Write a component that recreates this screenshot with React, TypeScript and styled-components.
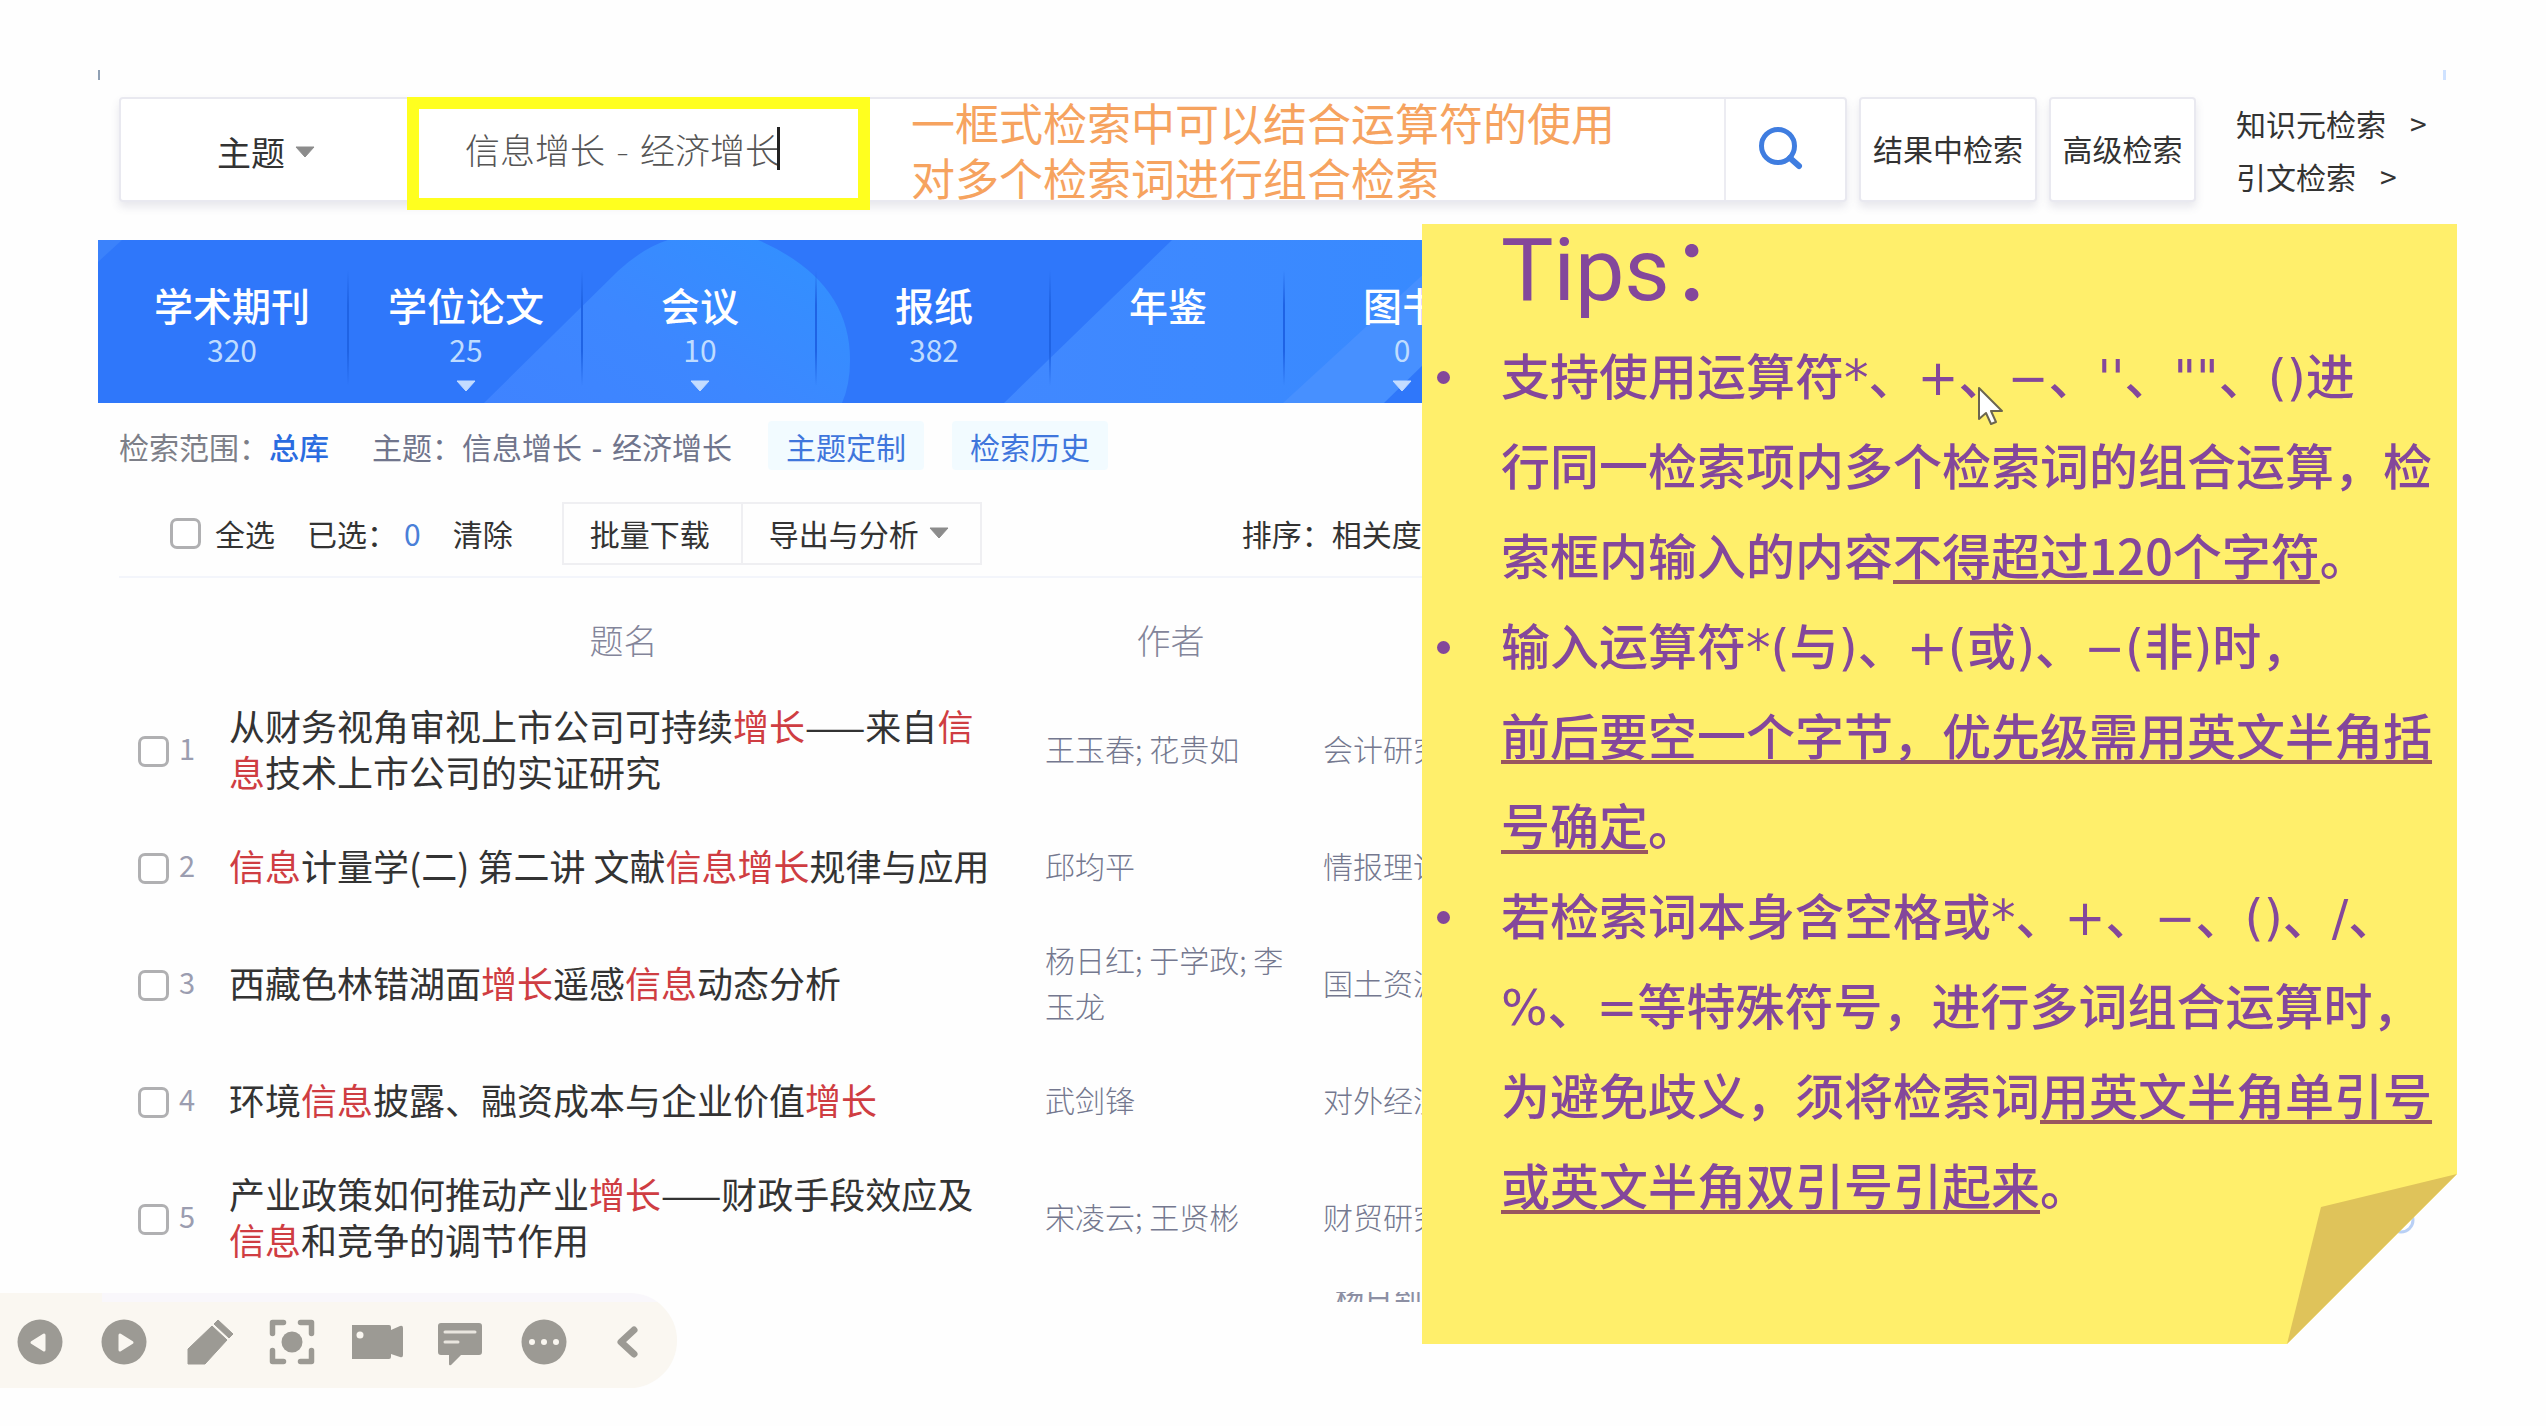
import React from "react";
import styled, { createGlobalStyle } from "styled-components";

const cjk = `"Noto Sans CJK SC", sans-serif`;
const wide = `"DejaVu Sans", "Noto Sans CJK SC", sans-serif`;

const GlobalStyle = createGlobalStyle`
  * { box-sizing: border-box; }
  body { margin: 0; background: #fefefe; font-family: ${cjk}; color: #333; }
  button, input, select { font: inherit; color: inherit; margin: 0; padding: 0; background: none; border: 0; }
  a { color: inherit; text-decoration: none; }
  p, ul, h2 { margin: 0; padding: 0; }
`;

const Page = styled.div`
  position: relative;
  min-height: 100vh;
  overflow: hidden;
  padding: 70px 100px 0 98px;
`;

const Slide = styled.main`
  display: flex;
  flex-direction: column;
`;

const FrameTop = styled.div`
  height: 10px;
  border-left: 2px solid #8fa0b4;
  border-right: 3px solid #cfe2ff;
`;

const SearchRow = styled.form`
  display: flex;
  gap: 12px;
  height: 105px;
  margin: 17px 0 0 21px;
`;

const SearchBox = styled.div`
  flex: 1;
  display: flex;
  background: #fff;
  border: 2px solid #e9e9f0;
  border-radius: 4px;
  box-shadow: 0 5px 8px rgba(90, 90, 130, 0.14);
`;

const FieldPicker = styled.label`
  flex: none;
  width: 286px;
  display: flex;
  align-items: center;
  justify-content: center;
  gap: 10px;
  padding: 4px 0 0 4px;
  font-size: 34px;
`;

const FieldSelect = styled.select`
  appearance: none;
  line-height: 48px;
`;

const QueryFrame = styled.label`
  flex: none;
  width: 463px;
  height: 113px;
  margin-top: -2px;
  padding: 0 0 10px 46px;
  display: flex;
  align-items: center;
  background: #fff;
  border: 12px solid #ffff1f;
`;

const QueryInput = styled.input`
  width: 316px;
  height: 48px;
  outline: none;
  font-family: ${wide};
  font-size: 35px;
  font-weight: 300;
  color: #555;
`;

const TextCursor = styled.span`
  width: 3px;
  height: 43px;
  margin-left: -4px;
  background: #222;
`;

const Hint = styled.p`
  flex: 1;
  margin-top: -4px;
  padding-left: 41px;
  font-size: 44px;
  line-height: 55px;
  color: #f6a35f;
  white-space: nowrap;
`;

const SearchButton = styled.button`
  flex: none;
  width: 121px;
  padding: 0 10px 4px 0;
  border-left: 2px solid #ececf2;
  display: flex;
  align-items: center;
  justify-content: center;
`;

const BoxButton = styled.button<{ $width: number }>`
  width: ${(p) => p.$width}px;
  padding-bottom: 4px;
  background: #fff;
  border: 2px solid #e9e9f0;
  border-radius: 4px;
  box-shadow: 0 5px 8px rgba(90, 90, 130, 0.14);
  font-size: 30px;
  white-space: nowrap;
`;

const SideLinks = styled.nav`
  width: 210px;
  margin-left: 28px;
  display: flex;
  flex-direction: column;
`;

const SideLink = styled.a`
  display: flex;
  align-items: center;
  gap: 24px;
  font-size: 30px;
  line-height: 53px;
  white-space: nowrap;
`;

const Banner = styled.nav`
  position: relative;
  display: flex;
  height: 163px;
  margin-top: 38px;
  padding-left: 17px;
  background: #2f77fa;
  overflow: hidden;
`;

const BannerArt = styled.svg`
  position: absolute;
  left: 0;
  top: 0;
`;

const Tab = styled.a`
  position: relative;
  width: 234px;
  display: flex;
  flex-direction: column;
  align-items: center;
  padding-top: 38px;
  color: #fff;

  &::after {
    content: "";
    position: absolute;
    right: 0;
    top: 30px;
    width: 2px;
    height: 116px;
    background: linear-gradient(transparent, #1f63e4 30%, #1f63e4 70%, transparent);
  }
`;

const TabName = styled.span`
  font-size: 39px;
  font-weight: 500;
  line-height: 52px;
  white-space: nowrap;
`;

const TabCount = styled.span`
  height: 40px;
  margin-bottom: 10px;
  font-size: 30px;
  line-height: 38px;
  color: #bfdcff;
`;

const InfoRow = styled.div`
  display: flex;
  align-items: center;
  height: 49px;
  margin: 18px 0 0 21px;
  font-size: 30px;
  white-space: nowrap;
  color: #7d7f88;
`;

const Scope = styled.a`
  margin-right: 43px;
  font-weight: 500;
  color: #2a6ce0;
`;

const Query = styled.span`
  width: 396px;
  font-family: ${wide};
  color: #70758c;
`;

const Chip = styled.button`
  height: 49px;
  padding: 0 18px;
  margin-right: 28px;
  background: #f2fbff;
  border-radius: 4px;
  color: #3f76dc;
`;

const Toolbar = styled.div`
  display: flex;
  align-items: center;
  height: 76px;
  margin: 32px 0 0 21px;
  padding: 0 0 12px 51px;
  border-bottom: 2px solid #f3f5fb;
  font-size: 30px;
  white-space: nowrap;
`;

const CheckLabel = styled.label`
  display: flex;
  align-items: center;
  gap: 14px;
`;

const Checkbox = styled.input`
  appearance: none;
  flex: none;
  width: 31px;
  height: 31px;
  border: 3px solid #b0b0b2;
  border-radius: 7px;
  background: #fff;
`;

const Picked = styled.span`
  display: flex;
  gap: 7px;
  margin: 0 32px;
`;

const PickedCount = styled.span`
  color: #4a80d8;
`;

const ActionGroup = styled.div`
  display: flex;
  height: 63px;
  margin-left: 49px;
  border: 2px solid #efeff2;
`;

const Action = styled.button`
  display: flex;
  align-items: center;
  gap: 10px;
  padding: 0 31px 0 26px;

  & + & {
    border-left: 2px solid #efeff2;
  }
`;

const Sort = styled.span`
  margin-left: 260px;
`;

const Results = styled.table`
  width: calc(100% - 21px);
  margin: 13px 0 0 21px;
  table-layout: fixed;
  border-collapse: collapse;

  th {
    height: 100px;
    padding: 0 0 4px;
    font-size: 34px;
    font-weight: 300;
    color: #83859a;
  }

  td {
    height: 117px;
    padding: 0 0 4px;
    vertical-align: middle;
  }
`;

const PickCell = styled.td`
  label {
    display: flex;
    align-items: center;
    gap: 10px;
    padding-left: 19px;
    font-size: 29px;
    line-height: 31px;
    color: #9b9db0;
  }

  input {
    margin-top: 8px;
  }
`;

const TitleCell = styled.td`
  && {
    padding-right: 26px;
  }
  font-size: 36px;
  line-height: 46px;
`;

const Hit = styled.em`
  font-style: normal;
  color: #cf3d42;
`;

const MetaCell = styled.td<{ $inset?: boolean }>`
  && {
    padding: ${(p) => (p.$inset ? "0 28px 4px 27px" : "0 0 4px")};
  }
  font-size: 30px;
  line-height: 46px;
  font-weight: 300;
  color: #74788f;
`;

const Sliver = styled.div`
  display: flex;
  align-items: center;
  height: 10px;
  padding-left: 12px;
  overflow: hidden;
  font-size: 29px;
  line-height: 10px;
  color: #8c8fa3;
`;

const SliverCell = styled.td`
  && {
    height: 26px;
    padding: 0;
    vertical-align: bottom;
  }
`;

const Help = styled.svg`
  position: absolute;
  right: 130px;
  top: 1205px;
`;

const Note = styled.aside`
  position: absolute;
  top: 224px;
  right: 89px;
  width: 1035px;
  height: 1120px;
  padding-left: 79px;
  color: #84479b;
  font-weight: 500;
`;

const NotePaper = styled.svg`
  position: absolute;
  left: 0;
  top: 0;
`;

const NoteTitle = styled.h2`
  position: relative;
  height: 110px;
  font-family: Roboto, ${cjk};
  font-size: 88px;
  font-weight: 400;
  line-height: 92px;
`;

const NoteList = styled.ul`
  position: relative;
  list-style: none;
  font-family: ${wide};
  font-size: 49px;
  line-height: 90px;
`;

const NoteItem = styled.li`
  position: relative;

  &::before {
    content: "";
    position: absolute;
    left: -64px;
    top: 37px;
    width: 13px;
    height: 13px;
    border-radius: 50%;
    background: #84479b;
  }
`;

const Line = styled.span`
  display: block;
  height: 90px;
  white-space: nowrap;
`;

const Mark = styled.u`
  font-family: ${cjk};
  line-height: 1;
  text-decoration: underline;
  text-decoration-color: #99565f;
  text-decoration-thickness: 4px;
  text-underline-offset: 5px;
  text-decoration-skip-ink: none;
`;

const Pointer = styled.svg`
  position: absolute;
  left: 555px;
  top: 162px;
`;

const ShowBar = styled.div`
  position: absolute;
  left: 0;
  top: 1293px;
  width: 677px;
  height: 95px;
  display: flex;
  align-items: center;
  padding: 2px 0 0 16px;
  border-radius: 0 48px 48px 0;
  background: linear-gradient(#f9f7fb, #f9f7fb) 102px 0 / 575px 9px no-repeat, #faf7f1;
`;

const ShowButton = styled.button`
  display: flex;
  width: 84px;
  justify-content: flex-start;
`;

const CollapseButton = styled(ShowButton)`
  width: 58px;
  padding-left: 6px;
`;

const Caret = ({ size = 20, color = "#8c8c8c" }: { size?: number; color?: string }) => (
  <svg width={size} height="12" viewBox="0 0 20 12" aria-hidden="true">
    <path d="M1 1h18l-9 10z" fill={color} stroke={color} strokeLinejoin="round" />
  </svg>
);

const tabs = [
  { name: "学术期刊", count: "320", more: false },
  { name: "学位论文", count: "25", more: true },
  { name: "会议", count: "10", more: true },
  { name: "报纸", count: "382", more: false },
  { name: "年鉴", count: "", more: false },
  { name: "图书", count: "0", more: true },
];

const rows = [
  {
    title: ["从财务视角审视上市公司可持续", "*增长", "——来自", "*信息", "技术上市公司的实证研究"],
    author: "王玉春; 花贵如",
    source: "会计研究",
  },
  {
    title: ["*信息", "计量学(二) 第二讲 文献", "*信息增长", "规律与应用"],
    author: "邱均平",
    source: "情报理论",
  },
  {
    title: ["西藏色林错湖面", "*增长", "遥感", "*信息", "动态分析"],
    author: "杨日红; 于学政; 李玉龙",
    source: "国土资源",
  },
  {
    title: ["环境", "*信息", "披露、融资成本与企业价值", "*增长"],
    author: "武剑锋",
    source: "对外经济",
  },
  {
    title: ["产业政策如何推动产业", "*增长", "——财政手段效应及", "*信息", "和竞争的调节作用"],
    author: "宋凌云; 王贤彬",
    source: "财贸研究",
  },
];

const gray = "#9c9a94";

export default function App() {
  return (
    <Page>
      <GlobalStyle />
      <Slide>
        <FrameTop />
        <SearchRow onSubmit={(e) => e.preventDefault()}>
          <SearchBox>
            <FieldPicker>
              <FieldSelect aria-label="检索字段">
                <option>主题</option>
              </FieldSelect>
              <Caret />
            </FieldPicker>
            <QueryFrame>
              <QueryInput aria-label="检索词" defaultValue="信息增长 - 经济增长" />
              <TextCursor />
            </QueryFrame>
            <Hint>
              一框式检索中可以结合运算符的使用
              <br />
              对多个检索词进行组合检索
            </Hint>
            <SearchButton aria-label="检索">
              <svg width="46" height="44" viewBox="0 0 46 44" fill="none" stroke="#3f7de0" aria-hidden="true">
                <circle cx="20" cy="20" r="16.5" strokeWidth="5" />
                <path d="M32 32l9 8" strokeWidth="6" strokeLinecap="round" />
              </svg>
            </SearchButton>
          </SearchBox>
          <BoxButton type="button" $width={178}>结果中检索</BoxButton>
          <BoxButton type="button" $width={147}>高级检索</BoxButton>
          <SideLinks>
            <SideLink href="#">知识元检索<span>&gt;</span></SideLink>
            <SideLink href="#">引文检索<span>&gt;</span></SideLink>
          </SideLinks>
        </SearchRow>

        <Banner>
          <BannerArt width="2348" height="163" aria-hidden="true">
            <defs>
              <linearGradient id="drop" x1="0" y1="1" x2="1" y2="0.3">
                <stop offset="0" stopColor="#3f83ff" />
                <stop offset="0.5" stopColor="#3d87ff" />
                <stop offset="1" stopColor="#338fff" />
              </linearGradient>
              <linearGradient id="sweep" x1="0" y1="0" x2="1" y2="0">
                <stop offset="0" stopColor="#4188ff" />
                <stop offset="0.7" stopColor="#388aff" />
                <stop offset="1" stopColor="#3c84fb" />
              </linearGradient>
            </defs>
            <path d="M0 0h24L0 22z" fill="#3b82fb" />
            <path d="M386 163L520 31Q545 8 570 0H660Q752 40 752 120Q752 145 744 163z" fill="url(#drop)" />
            <path d="M906 163L1074 0H1500V163z" fill="url(#sweep)" />
            <path d="M1185 163L1330 30V163z" fill="#4790ff" />
            <path d="M1286 163L1330 120V163z" fill="#2f77fa" />
          </BannerArt>
          {tabs.map((t) => (
            <Tab href="#" key={t.name}>
              <TabName>{t.name}</TabName>
              <TabCount>{t.count}</TabCount>
              {t.more && <Caret color="#c3dcff" />}
            </Tab>
          ))}
        </Banner>

        <InfoRow>
          <span>检索范围：</span>
          <Scope href="#">总库</Scope>
          <Query>主题：信息增长 - 经济增长</Query>
          <Chip>主题定制</Chip>
          <Chip>检索历史</Chip>
        </InfoRow>

        <Toolbar>
          <CheckLabel>
            <Checkbox type="checkbox" />
            全选
          </CheckLabel>
          <Picked>
            已选：<PickedCount>0</PickedCount>
          </Picked>
          <button>清除</button>
          <ActionGroup>
            <Action>批量下载</Action>
            <Action>
              导出与分析
              <Caret />
            </Action>
          </ActionGroup>
          <Sort>排序：相关度</Sort>
        </Toolbar>

        <Results>
          <colgroup>
            <col style={{ width: 110 }} />
            <col style={{ width: 789 }} />
            <col style={{ width: 305 }} />
            <col />
          </colgroup>
          <thead>
            <tr>
              <th />
              <th>题名</th>
              <th>作者</th>
              <th />
            </tr>
          </thead>
          <tbody>
            {rows.map((r, i) => (
              <tr key={r.author}>
                <PickCell>
                  <label>
                    <Checkbox type="checkbox" />
                    {i + 1}
                  </label>
                </PickCell>
                <TitleCell>
                  {r.title.map((part, k) =>
                    part.startsWith("*") ? <Hit key={k}>{part.slice(1)}</Hit> : <span key={k}>{part}</span>
                  )}
                </TitleCell>
                <MetaCell $inset>{r.author}</MetaCell>
                <MetaCell>{r.source}</MetaCell>
              </tr>
            ))}
            <tr>
              <SliverCell colSpan={3} />
              <SliverCell>
                <Sliver>杨日到</Sliver>
              </SliverCell>
            </tr>
          </tbody>
        </Results>
      </Slide>

      <Help width="30" height="30" viewBox="0 0 30 30" fill="none" aria-hidden="true">
        <circle cx="15" cy="15" r="12" stroke="#b9d0f5" strokeWidth="3" />
      </Help>

      <Note>
        <NotePaper width="1035" height="1120" aria-hidden="true">
          <path d="M0 0H1035V950L865 1120H0z" fill="#ffef6b" />
          <path d="M1035 950L899 983L865 1120z" fill="#dfc35a" />
        </NotePaper>
        <NoteTitle>Tips：</NoteTitle>
        <NoteList>
          <NoteItem>
            <Line>支持使用运算符*、+、−、''、""、()进</Line>
            <Line>行同一检索项内多个检索词的组合运算，检</Line>
            <Line>索框内输入的内容<Mark>不得超过120个字符</Mark>。</Line>
          </NoteItem>
          <NoteItem>
            <Line>输入运算符*(与)、+(或)、−(非)时，</Line>
            <Line><Mark>前后要空一个字节，优先级需用英文半角括</Mark></Line>
            <Line><Mark>号确定</Mark>。</Line>
          </NoteItem>
          <NoteItem>
            <Line>若检索词本身含空格或*、+、−、()、/、</Line>
            <Line>%、=等特殊符号，进行多词组合运算时，</Line>
            <Line>为避免歧义，须将检索词<Mark>用英文半角单引号</Mark></Line>
            <Line><Mark>或英文半角双引号引起来</Mark>。</Line>
          </NoteItem>
        </NoteList>
        <Pointer width="28" height="40" viewBox="0 0 28 40" aria-hidden="true">
          <path d="M2 2V33L9 27L14 38L19 36L14 25H25z" fill="#fff" stroke="#6b6550" strokeWidth="2" strokeLinejoin="round" />
        </Pointer>
      </Note>

      <ShowBar>
        <ShowButton aria-label="上一页">
          <svg width="48" height="48" viewBox="0 0 48 48">
            <circle cx="24" cy="24" r="22.5" fill={gray} />
            <path d="M28 17v15L16 24.5z" fill="#faf7f1" stroke="#faf7f1" strokeWidth="3" strokeLinejoin="round" />
          </svg>
        </ShowButton>
        <ShowButton aria-label="下一页">
          <svg width="48" height="48" viewBox="0 0 48 48">
            <circle cx="24" cy="24" r="22.5" fill={gray} />
            <path d="M20 17v15l12-7.5z" fill="#faf7f1" stroke="#faf7f1" strokeWidth="3" strokeLinejoin="round" />
          </svg>
        </ShowButton>
        <ShowButton aria-label="画笔">
          <svg width="50" height="48" viewBox="0 0 50 48" fill={gray}>
            <path d="M4 46V31L28 8L43 22L21 46z" stroke={gray} strokeWidth="1" />
            <path d="M30 6L34 2L49 16L45 20z" stroke={gray} strokeWidth="1" strokeLinejoin="round" />
          </svg>
        </ShowButton>
        <ShowButton aria-label="聚焦">
          <svg width="48" height="48" viewBox="0 0 48 48" fill="none" stroke={gray} strokeWidth="5.5" strokeLinecap="round" strokeLinejoin="round">
            <path d="M4.5 15.5V4.5h11M32.5 4.5h11v11M4.5 32.5v11h11M43.5 32.500v11h-11" />
            <circle cx="24" cy="24" r="10.5" fill={gray} stroke="none" />
          </svg>
        </ShowButton>
        <ShowButton aria-label="录像">
          <svg width="56" height="48" viewBox="2 0 56 48" fill={gray}>
            <path d="M0 9q0-2 2-2H39q2 0 2 2v3l9-4q3-1 3 2V37q0 3-3 2l-9-3v3q0 2-2 2H2q-2 0-2-2z" />
            <circle cx="10" cy="17" r="3.5" fill="#faf7f1" />
          </svg>
        </ShowButton>
        <ShowButton aria-label="批注">
          <svg width="50" height="48" viewBox="0 0 50 48">
            <path d="M2 8q0-3 3-3H43q3 0 3 3V34q0 3-3 3H25L15 47q-2 1-2-1V37H5q-3 0-3-3z" fill={gray} />
            <path d="M9 14H39M9 24H22" stroke="#e9e6df" strokeWidth="3" strokeLinecap="round" />
          </svg>
        </ShowButton>
        <ShowButton aria-label="更多">
          <svg width="48" height="48" viewBox="0 0 48 48">
            <circle cx="24" cy="24" r="22.5" fill={gray} />
            <g fill="#faf7f1">
              <circle cx="12" cy="24" r="3" />
              <circle cx="24" cy="24" r="3" />
              <circle cx="36" cy="24" r="3" />
            </g>
          </svg>
        </ShowButton>
        <CollapseButton aria-label="收起">
          <svg width="36" height="48" viewBox="0 0 36 48" fill="none" stroke={gray} strokeWidth="7" strokeLinecap="round" strokeLinejoin="round">
            <path d="M24 12L11 24L24 36" />
          </svg>
        </CollapseButton>
      </ShowBar>
    </Page>
  );
}
